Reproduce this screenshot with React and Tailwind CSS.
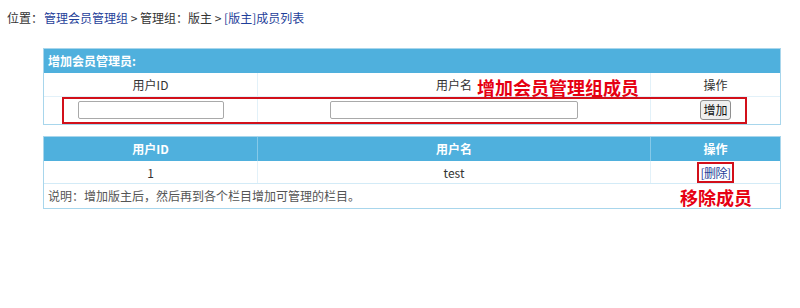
import React from 'react'

function App() {
    const font = "font-['Noto_Sans_CJK_SC','Noto_Sans',sans-serif]"
    return (
        <div className={`relative w-[800px] h-[308px] bg-white text-[12px] text-[#333] ${font}`}>
            <div className="pl-[7px] pt-[10px] h-[48px] leading-[16px]">
                位置：
                <a className="ml-[1px] text-[#1f3f9a]">管理会员管理组</a>
                <span> &gt; 管理组：版主 &gt; </span>
                <a className="text-[#1f3f9a]">[版主]成员列表</a>
            </div>

            {/* add member */}
            <div className="relative ml-[43px] w-[738px] border border-[#a8d6ec] pb-[2px]">
                <div className="h-[24px] bg-[#4fb0dd] text-white font-bold pl-[4px] leading-[24px]">增加会员管理员:</div>
                <div className="flex h-[24px] leading-[24px] border-b border-[#e2f1f9]">
                    <div className="w-[213px] text-center">用户ID</div>
                    <div className="w-[393px] text-center border-l border-[#e2f1f9]">用户名</div>
                    <div className="flex-1 text-center border-l border-[#e2f1f9]">操作</div>
                </div>
                <div className="flex h-[25px] items-center">
                    <div className="w-[213px] flex justify-center">
                        <input type="text" className="w-[146px] h-[18px] border border-[#a9a9a9] rounded-[2px] bg-white" />
                    </div>
                    <div className="w-[393px] h-full flex items-center justify-center border-l border-[#e2f1f9]">
                        <input type="text" className="w-[248px] h-[18px] border border-[#a9a9a9] rounded-[2px] bg-white" />
                    </div>
                    <div className="flex-1 h-full flex items-center justify-center border-l border-[#e2f1f9]">
                        <button className="w-[31px] h-[20px] bg-[#efefef] border border-[#8f8f8f] rounded-[3px] text-[12px] leading-[18px] text-[#111]">增加</button>
                    </div>
                </div>
                <div className="absolute left-[433px] top-[28px] text-[18px] font-bold text-[#e60012] leading-[20px]">增加会员管理组成员</div>
                <div className="absolute left-[18px] top-[48px] w-[685px] h-[27px] border-2 border-[#d2101a]"></div>
            </div>

            {/* member list */}
            <div className="relative ml-[43px] mt-[11px] w-[738px] border border-[#a8d6ec]">
                <div className="flex h-[24px] bg-[#4fb0dd] text-white font-bold leading-[24px]">
                    <div className="w-[213px] text-center">用户ID</div>
                    <div className="w-[393px] text-center border-l border-[#86c9e8]">用户名</div>
                    <div className="flex-1 text-center border-l border-[#86c9e8]">操作</div>
                </div>
                <div className="flex h-[23px] leading-[23px] border-b border-[#d3ebf7]">
                    <div className="w-[213px] text-center">1</div>
                    <div className="w-[393px] text-center border-l border-[#e2f1f9]">test</div>
                    <div className="flex-1 flex items-center justify-center border-l border-[#e2f1f9]">
                        <a className="px-[1px] h-[21px] leading-[17px] border-2 border-[#d2101a] text-[#1f3f9a] tracking-[-0.5px]">[删除]</a>
                    </div>
                </div>
                <div className="h-[24px] leading-[24px] pl-[4px] text-[#555]">说明：增加版主后，然后再到各个栏目增加可管理的栏目。</div>
                <div className="absolute left-[636px] top-[50px] text-[18px] font-bold text-[#e60012] leading-[20px]">移除成员</div>
            </div>
        </div>
    )
}

export default App
